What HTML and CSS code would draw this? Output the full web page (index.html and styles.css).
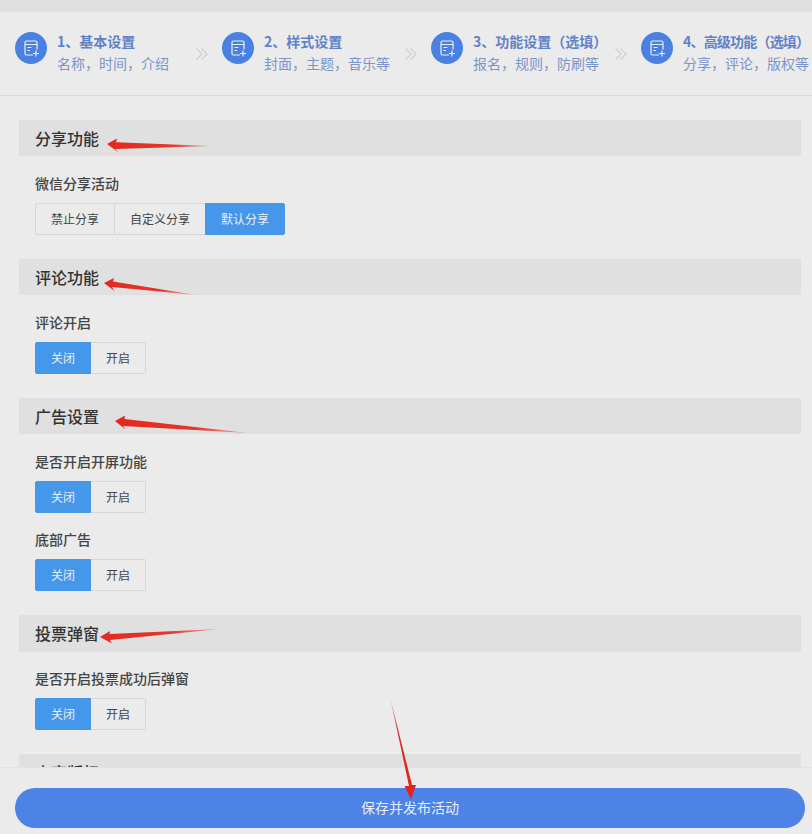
FILE: index.html
```html
<!DOCTYPE html>
<html lang="zh-CN">
<head>
<meta charset="utf-8">
<title>高级功能</title>
<link rel="stylesheet" href="styles.css">
</head>
<body>
<div class="page">
  <div class="topstrip"></div>
  <nav class="steps">
    <div class="step">
      <span class="step-icon"><svg viewBox="0 0 32 32" width="32" height="32"><use href="#doc"/></svg></span>
      <div class="step-text step-text-first"><div class="step-title">1、基本设置</div><div class="step-sub">名称，时间，介绍</div></div>
    </div>
    <span class="step-sep"><svg viewBox="0 0 14 14" width="14" height="14"><use href="#chev"/></svg></span>
    <div class="step">
      <span class="step-icon"><svg viewBox="0 0 32 32" width="32" height="32"><use href="#doc"/></svg></span>
      <div class="step-text"><div class="step-title">2、样式设置</div><div class="step-sub">封面，主题，音乐等</div></div>
    </div>
    <span class="step-sep"><svg viewBox="0 0 14 14" width="14" height="14"><use href="#chev"/></svg></span>
    <div class="step">
      <span class="step-icon"><svg viewBox="0 0 32 32" width="32" height="32"><use href="#doc"/></svg></span>
      <div class="step-text step-text-wide"><div class="step-title">3、功能设置（选填）</div><div class="step-sub">报名，规则，防刷等</div></div>
    </div>
    <span class="step-sep"><svg viewBox="0 0 14 14" width="14" height="14"><use href="#chev"/></svg></span>
    <div class="step">
      <span class="step-icon"><svg viewBox="0 0 32 32" width="32" height="32"><use href="#doc"/></svg></span>
      <div class="step-text"><div class="step-title step-title-tight">4、高级功能（选填）</div><div class="step-sub">分享，评论，版权等</div></div>
    </div>
  </nav>

  <main class="content">
    <section class="section">
      <h2 class="section-head">分享功能</h2>
      <div class="field">
        <div class="field-label">微信分享活动</div>
        <div class="btn-group">
          <span class="opt">禁止分享</span><span class="opt">自定义分享</span><span class="opt on joined">默认分享</span>
        </div>
      </div>
    </section>
    <section class="section">
      <h2 class="section-head">评论功能</h2>
      <div class="field">
        <div class="field-label">评论开启</div>
        <div class="btn-group"><span class="opt on">关闭</span><span class="opt">开启</span></div>
      </div>
    </section>
    <section class="section">
      <h2 class="section-head">广告设置</h2>
      <div class="field">
        <div class="field-label">是否开启开屏功能</div>
        <div class="btn-group"><span class="opt on">关闭</span><span class="opt">开启</span></div>
      </div>
      <div class="field field-next">
        <div class="field-label">底部广告</div>
        <div class="btn-group"><span class="opt on">关闭</span><span class="opt">开启</span></div>
      </div>
    </section>
    <section class="section">
      <h2 class="section-head section-head-tall">投票弹窗</h2>
      <div class="field field-next">
        <div class="field-label">是否开启投票成功后弹窗</div>
        <div class="btn-group"><span class="opt on">关闭</span><span class="opt">开启</span></div>
      </div>
    </section>
    <section class="section">
      <h2 class="section-head">内容版权</h2>
    </section>
  </main>

  <footer class="footer"><button class="save" type="button">保存并发布活动</button></footer>

  <svg class="arrows" viewBox="0 0 812 834" width="812" height="834">
    <defs>
      <linearGradient id="fade1" gradientUnits="userSpaceOnUse" x1="107" y1="144" x2="212" y2="146"><stop offset="0" stop-color="#e4291f"/><stop offset=".6" stop-color="#e4362b"/><stop offset="1" stop-color="#e9a9a0"/></linearGradient>
      <linearGradient id="fade2" gradientUnits="userSpaceOnUse" x1="104" y1="283" x2="195" y2="295"><stop offset="0" stop-color="#e4291f"/><stop offset=".6" stop-color="#e4362b"/><stop offset="1" stop-color="#e9a9a0"/></linearGradient>
      <linearGradient id="fade3" gradientUnits="userSpaceOnUse" x1="115" y1="421" x2="248" y2="433"><stop offset="0" stop-color="#e4291f"/><stop offset=".6" stop-color="#e4362b"/><stop offset="1" stop-color="#e9a9a0"/></linearGradient>
      <linearGradient id="fade4" gradientUnits="userSpaceOnUse" x1="100" y1="637" x2="220" y2="629"><stop offset="0" stop-color="#e4291f"/><stop offset=".6" stop-color="#e4362b"/><stop offset="1" stop-color="#e9a9a0"/></linearGradient>
      <linearGradient id="fade5" gradientUnits="userSpaceOnUse" x1="411" y1="798" x2="390" y2="697"><stop offset="0" stop-color="#e2231c"/><stop offset=".7" stop-color="#d9302a"/><stop offset="1" stop-color="#d9b0aa"/></linearGradient>
      <symbol id="doc" viewBox="0 0 32 32">
        <path d="M22 17.500V10.500a1.500 1.500 0 0 0-1.500-1.500H11.500a1.500 1.500 0 0 0-1.500 1.500v11a1.500 1.500 0 0 0 1.500 1.500h6.500" fill="none" stroke="#e9effb" stroke-width="1.200"/>
        <path d="M10 12.500h12M12.500 15.500h4M12.500 18.500h2.500M21 18.500v6M18 21.500h6" fill="none" stroke="#e9effb" stroke-width="1.200"/>
      </symbol>
      <symbol id="chev" viewBox="0 0 14 14">
        <path d="M1.500 1.500 7 7l-5.500 5.500M6.500 1.500 12 7l-5.500 5.500" fill="none" stroke="#d2d2d4" stroke-width="1.400"/>
      </symbol>
    </defs>
    <path d="M107 144 117 138.500 116 142.300 212 146 115.500 149 118 152Z" fill="url(#fade1)"/>
    <path d="M104 283 114 278 113 281.500 196 295 112 287 114.500 291Z" fill="url(#fade2)"/>
    <path d="M115 421 125 415.500 124.500 419 248 433 123 426 125.500 429.500Z" fill="url(#fade3)"/>
    <path d="M100 637 110 631 109.500 634 220 629 110 640 112 643.500Z" fill="url(#fade4)"/>
    <path d="M390 697 409 786 404.500 786 411 799 416 785 412 785Z" fill="url(#fade5)"/>
  </svg>
</div>
</body>
</html>
```
FILE: styles.css
```css
* { box-sizing: border-box; }
html, body { margin: 0; padding: 0; }
body {
  width: 812px;
  height: 834px;
  overflow: hidden;
  background: #ebebeb;
  font-family: "Noto Sans CJK SC", "Liberation Sans", sans-serif;
  color: #333;
}
.page { position: relative; width: 812px; height: 834px; overflow: hidden; }
.topstrip { height: 12px; background: #e0e0e0; }

.steps {
  display: flex;
  height: 84px;
  padding: 20px 0 0 15px;
  border-bottom: 1px solid #dcdcdc;
  white-space: nowrap;
}
.step { display: flex; flex: none; gap: 10px; height: 44px; }
.step-icon {
  flex: none;
  width: 32px;
  height: 32px;
  border-radius: 50%;
  background: #4a80e0;
}
.step-icon svg { display: block; }
.step-text { width: 126px; margin-top: -1px; }
.step-text-first { width: 124px; }
.step-text-wide { width: 127px; }
.step-title { font-size: 14px; line-height: 20px; font-weight: 700; color: #5f82c8; }
.step-title-tight { letter-spacing: -0.8px; }
.step-sub { font-size: 14px; line-height: 20px; margin-top: 2px; color: #7c95c9; }
.step-sep {
  flex: none;
  width: 41px;
  height: 44px;
  display: flex;
  align-items: center;
  justify-content: center;
}
.step-sep svg { display: block; }

.content { padding: 24px 11px 0 19px; }
.section { padding-bottom: 24px; }
.section-head {
  margin: 0;
  height: 36px;
  padding-left: 16px;
  background: #e0e0e0;
  font-size: 16px;
  font-weight: 500;
  line-height: 36px;
  color: #333;
}
.section-head-tall { height: 37px; }
.field { padding: 17px 0 0 16px; }
.field-next { padding-top: 16px; }
.field-label { font-size: 14px; line-height: 20px; height: 20px; margin-bottom: 10px; font-weight: 500; color: #444; }
.btn-group { display: flex; }
.opt {
  display: block;
  height: 32px;
  padding: 0 15px;
  border: 1px solid #d6d6d6;
  border-left-width: 0;
  background: #ebebeb;
  font-size: 12px;
  line-height: 30px;
  color: #444;
}
.opt:first-child { border-left-width: 1px; border-radius: 2px 0 0 2px; }
.opt:last-child { border-radius: 0 2px 2px 0; }
.opt.on { background: #4597ea; border-color: #4597ea; color: #e8eef8; }
.opt.joined { margin-left: -1px; border-left-width: 1px; }

.footer {
  position: absolute;
  left: 0;
  right: 0;
  bottom: 0;
  height: 67px;
  padding: 20px 7px 6px 15px;
  background: #ebebeb;
  border-top: 1px solid #e2e2e2;
}
.save {
  display: block;
  width: 790px;
  height: 40px;
  border: 0;
  border-radius: 20px;
  background: #4d82e6;
  color: #e8eef8;
  font-family: inherit;
  font-size: 14px;
  line-height: 38px;
  padding: 0 0 2px;
}
.arrows { position: absolute; left: 0; top: 0; pointer-events: none; }
```
